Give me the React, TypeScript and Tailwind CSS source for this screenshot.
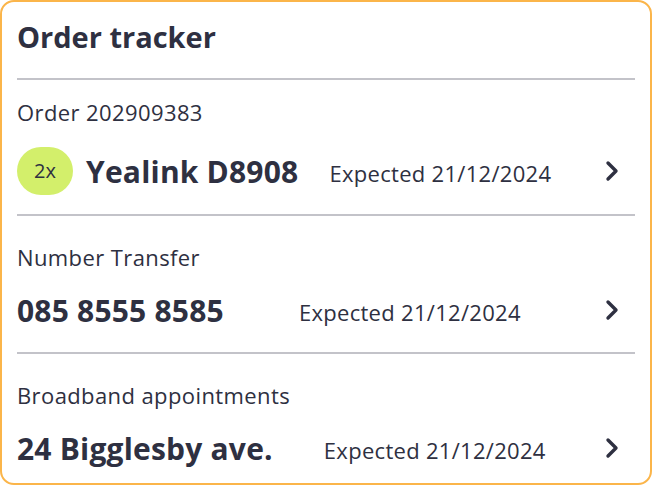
interface Row {
  label: string;
  title: string;
  badge?: string;
  gap: string;
  first?: boolean;
  last?: boolean;
}

const rows: Row[] = [
  { label: 'Order 202909383', title: 'Yealink D8908', badge: '2x', gap: 'ml-[31px]', first: true },
  { label: 'Number Transfer', title: '085 8555 8585', gap: 'ml-[75px]' },
  { label: 'Broadband appointments', title: '24 Bigglesby ave.', gap: 'ml-[51px]', last: true },
];

function Chevron() {
  return (
    <svg width="14" height="22" viewBox="0 0 14 22" fill="none" className="ml-auto mr-[16px]">
      <path d="M3 3l8 8-8 8" stroke="#2e3041" strokeWidth="3.4" strokeLinecap="round" strokeLinejoin="round" />
    </svg>
  );
}

export default function App() {
  return (
    <div className="w-[652px] h-[485px] bg-white font-['Open_Sans',sans-serif] text-[#2e3041]">
      <div className="h-full rounded-[14px] border-2 border-[#fbb54a] px-[15px] pt-[16px]">
        <h1 className="text-[29px] font-bold leading-[38px] pb-[22px] border-b-2 border-[#c3c3c9]">
          Order tracker
        </h1>

        {rows.map((row) => (
          <div
            key={row.label}
            className={`${row.last ? '' : 'border-b-2 border-[#c3c3c9]'} ${
              row.first ? 'pt-[19px] pb-[14px]' : 'pt-[28px] pb-[13px]'
            }`}
          >
            <div className="text-[22px] leading-[26px] tracking-[0.4px]">{row.label}</div>
            <div className={`flex items-center h-[58px] ${row.first ? 'mt-[17px]' : 'mt-[11px]'}`}>
              {row.badge && (
                <span className="mr-[13px] flex h-[48px] w-[56px] items-center justify-center rounded-full bg-[#d3ef6b] text-[20px]">
                  {row.badge}
                </span>
              )}
              <span className="text-[30px] font-bold tracking-[0.2px]">{row.title}</span>
              <span className={`${row.gap} text-[22px] tracking-[0.3px] mt-[4px]`}>Expected 21/12/2024</span>
              <Chevron />
            </div>
          </div>
        ))}
      </div>
    </div>
  );
}
